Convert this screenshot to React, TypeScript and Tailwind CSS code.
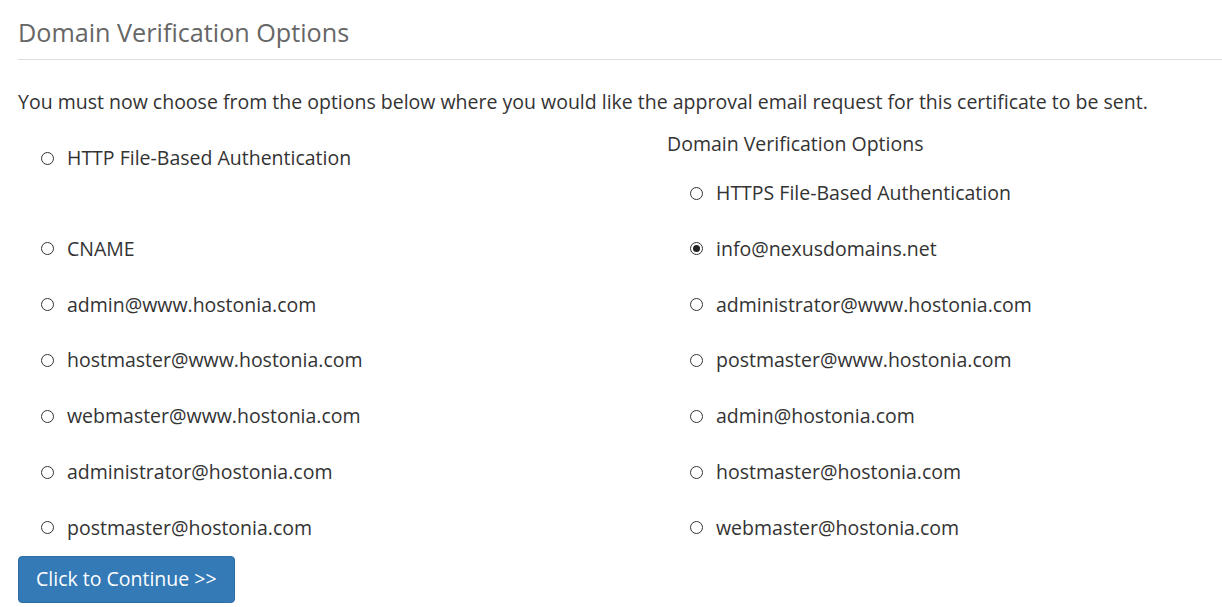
import { useState } from 'react';

const leftOptions = [
  'CNAME',
  'admin@www.hostonia.com',
  'hostmaster@www.hostonia.com',
  'webmaster@www.hostonia.com',
  'administrator@hostonia.com',
  'postmaster@hostonia.com',
];

const rightOptions = [
  'info@nexusdomains.net',
  'administrator@www.hostonia.com',
  'postmaster@www.hostonia.com',
  'admin@hostonia.com',
  'hostmaster@hostonia.com',
  'webmaster@hostonia.com',
];

function Radio({
  label,
  checked,
  onSelect,
}: {
  label: string;
  checked: boolean;
  onSelect: () => void;
}) {
  return (
    <label className="flex items-center cursor-pointer pl-[23px]" onClick={onSelect}>
      <span className="flex items-center justify-center w-[13px] h-[13px] rounded-full border border-[#333] bg-white">
        {checked && <span className="w-[7px] h-[7px] rounded-full bg-[#222]" />}
      </span>
      <span className="ml-[13px]">{label}</span>
    </label>
  );
}

export default function App() {
  const [selected, setSelected] = useState('info@nexusdomains.net');

  return (
    <div
      className="w-[1222px] h-[607px] overflow-hidden bg-white text-[#333] pl-[18px]"
      style={{ fontFamily: '"Open Sans", "Liberation Sans", sans-serif' }}
    >
      <h2 className="pt-[15px] pb-[10px] text-[25.2px] leading-[34px] text-[#666] border-b border-[#ddd] font-normal">
        Domain Verification Options
      </h2>

      <p className="mt-[29px] text-[19.5px] leading-[26px]">
        You must now choose from the options below where you would like the approval email request for this
        certificate to be sent.
      </p>

      <div className="grid grid-cols-[649px_1fr] text-[19.5px] leading-[26px]">
        <div className="pt-[30px] h-[106px]">
          <Radio
            label="HTTP File-Based Authentication"
            checked={selected === 'http'}
            onSelect={() => setSelected('http')}
          />
        </div>
        <div className="pt-[16px] h-[106px]">
          <div>Domain Verification Options</div>
          <div className="pt-[23px]">
            <Radio
              label="HTTPS File-Based Authentication"
              checked={selected === 'https'}
              onSelect={() => setSelected('https')}
            />
          </div>
        </div>

        {leftOptions.map((opt, i) => (
          <div key={opt} className="contents">
            <div className="h-[55.8px] flex items-center">
              <Radio label={opt} checked={selected === opt} onSelect={() => setSelected(opt)} />
            </div>
            <div className="h-[55.8px] flex items-center">
              <Radio
                label={rightOptions[i]}
                checked={selected === rightOptions[i]}
                onSelect={() => setSelected(rightOptions[i])}
              />
            </div>
          </div>
        ))}
      </div>

      <button className="mt-0 h-[47px] px-[17px] rounded-[4px] bg-[#337ab7] border border-[#2e6da4] text-white text-[19.5px] leading-[26px] hover:bg-[#286090]">
        Click to Continue &gt;&gt;
      </button>
    </div>
  );
}
